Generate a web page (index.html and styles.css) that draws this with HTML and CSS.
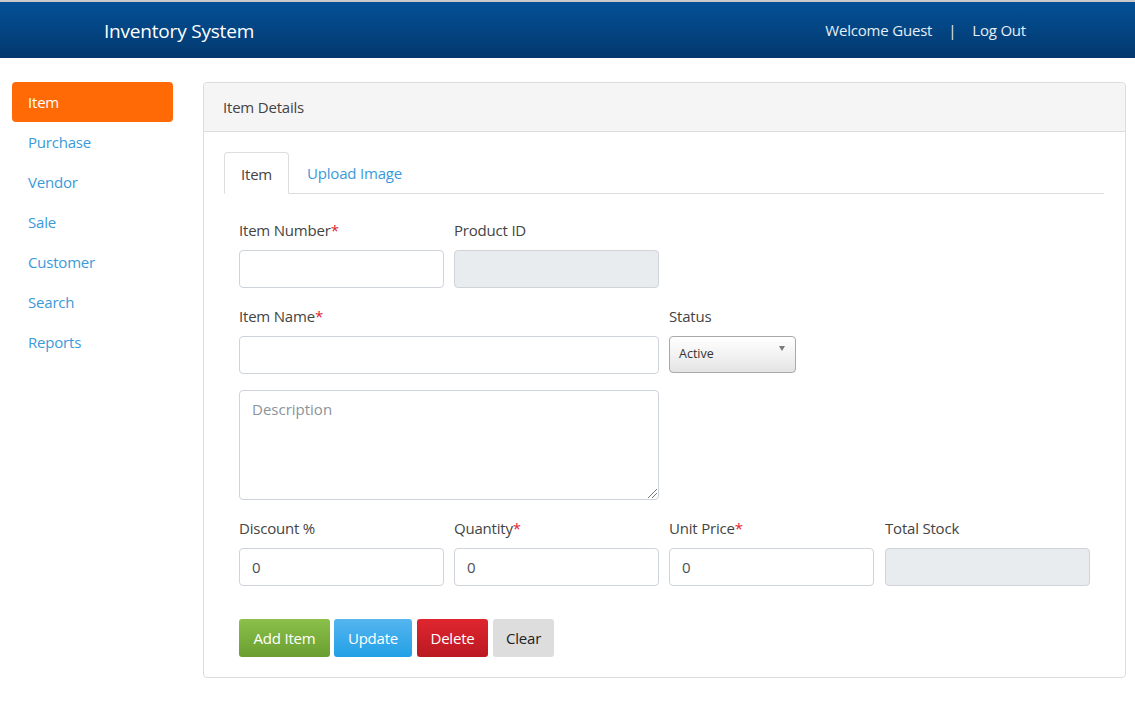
FILE: index.html
```html
<!DOCTYPE html>
<html>
<head>
<meta charset="utf-8">
<link rel="stylesheet" href="styles.css">
</head>
<body>
<header class="topbar">
  <div class="brand">Inventory System</div>
  <div class="user"><span>Welcome Guest</span><span class="sep">|</span><span>Log Out</span></div>
</header>
<div class="main">
  <nav class="sidebar">
    <a class="nav-item active">Item</a>
    <a class="nav-item">Purchase</a>
    <a class="nav-item">Vendor</a>
    <a class="nav-item">Sale</a>
    <a class="nav-item">Customer</a>
    <a class="nav-item">Search</a>
    <a class="nav-item">Reports</a>
  </nav>
  <section class="panel">
    <div class="panel-head">Item Details</div>
    <div class="panel-body">
      <div class="tabs">
        <div class="tab active">Item</div>
        <div class="tab link">Upload Image</div>
      </div>
      <div class="form">
        <div class="row">
          <div class="field"><label>Item Number<span class="req">*</span></label><div class="input"></div></div>
          <div class="field"><label>Product ID</label><div class="input disabled"></div></div>
        </div>
        <div class="row tight">
          <div class="field wide"><label>Item Name<span class="req">*</span></label><div class="input"></div></div>
          <div class="field"><label>Status</label><div class="select">Active<span class="caret"></span></div></div>
        </div>
        <div class="row">
          <div class="textarea">Description<span class="grip"></span></div>
        </div>
        <div class="row">
          <div class="field"><label>Discount %</label><div class="input">0</div></div>
          <div class="field"><label>Quantity<span class="req">*</span></label><div class="input">0</div></div>
          <div class="field"><label>Unit Price<span class="req">*</span></label><div class="input">0</div></div>
          <div class="field last"><label>Total Stock</label><div class="input disabled"></div></div>
        </div>
        <div class="buttons">
          <button class="btn green">Add Item</button>
          <button class="btn blue">Update</button>
          <button class="btn red">Delete</button>
          <button class="btn grey">Clear</button>
        </div>
      </div>
    </div>
  </section>
</div>
</body>
</html>
```
FILE: styles.css
```css
* { box-sizing: border-box; }
html, body { margin: 0; padding: 0; }
body {
  font-family: "Open Sans", "Noto Sans", sans-serif;
  font-size: 15px;
  color: #333;
  background: #fff;
}
.topbar {
  height: 58px;
  border-top: 2px solid #c9c9c9;
  background: linear-gradient(#035097, #03396e);
  display: flex;
  align-items: center;
  justify-content: space-between;
  color: #fff;
  padding: 2px 109px 0 104px;
}
.brand { font-size: 19px; letter-spacing: -0.2px; }
.user { font-size: 15px; color: #e6eef6; display: flex; gap: 0; padding-bottom: 2px; letter-spacing: -0.2px; }
.user .sep { margin: 0 16px; }
.main {
  display: flex;
  padding: 24px 9px 0 12px;
  gap: 30px;
}
.sidebar { width: 161px; display: flex; flex-direction: column; flex-shrink: 0; }
.nav-item {
  height: 40px;
  line-height: 40px;
  padding-left: 16px;
  color: #3a9ad9;
  font-size: 15px;
  letter-spacing: -0.2px;
  border-radius: 4px;
}
.nav-item.active { background: #ff6a07; color: #fff; }
.panel {
  flex: 1;
  border: 1px solid #dcdcdc;
  border-radius: 4px;
  height: 596px;
}
.panel-head {
  height: 49px;
  background: #f5f5f5;
  border-bottom: 1px solid #dcdcdc;
  padding-left: 19px;
  line-height: 48px;
  color: #444;
  letter-spacing: -0.2px;
  border-radius: 4px 4px 0 0;
}
.panel-body { padding: 20px 21px 0 20px; }
.tabs {
  display: flex;
  border-bottom: 1px solid #dddddd;
  height: 42px;
}
.tab {
  height: 42px;
  line-height: 42px;
  padding: 0 16px;
  letter-spacing: -0.2px;
}
.tab.active {
  background: #fff;
  border: 1px solid #ddd;
  border-bottom-color: #fff;
  border-radius: 4px 4px 0 0;
  height: 42px;
  color: #444;
}
.tab.link { color: #3a9ad9; padding-left: 18px; }
.form { padding: 26px 0 0 15px; }
.row { display: flex; gap: 10px; margin-bottom: 18px; }
.row.tight { margin-bottom: 16px; }
.field { width: 205px; display: flex; flex-direction: column; }
.field.wide { width: 420px; }
.field.last { margin-left: 1px; }
label { height: 20px; line-height: 20px; margin-bottom: 10px; color: #444; letter-spacing: -0.2px; }
.req { color: #e0222c; }
.input {
  height: 38px;
  border: 1px solid #cfd4da;
  border-radius: 4px;
  padding: 0 12px;
  line-height: 36px;
  color: #495057;
}
.input.disabled { background: #e9ecef; }
.select {
  width: 127px;
  height: 37px;
  border: 1px solid #a9a9a9;
  border-radius: 4px;
  background: linear-gradient(#ffffff, #f1f1f1 55%, #e3e3e3);
  font-size: 12.5px;
  line-height: 34px;
  padding-left: 9px;
  color: #333;
  position: relative;
}
.caret {
  position: absolute;
  right: 10px;
  top: 9px;
  border-left: 3px solid transparent;
  border-right: 3px solid transparent;
  border-top: 5px solid #7a7a7a;
}
.textarea {
  width: 420px;
  height: 110px;
  border: 1px solid #cfd4da;
  border-radius: 4px;
  padding: 8px 12px;
  color: #8a939b;
  position: relative;
}
.grip {
  position: absolute;
  right: 1px;
  bottom: 1px;
  width: 9px;
  height: 9px;
  background: linear-gradient(135deg, transparent 45%, #777 45%, #777 52%, transparent 52%, transparent 70%, #777 70%, #777 77%, transparent 77%);
}
.buttons { display: flex; gap: 4px; padding-top: 15px; }
.btn {
  font-family: inherit;
  font-size: 15px;
  height: 38px;
  border: 0;
  border-radius: 3px;
  color: #fff;
  padding: 0 13px;
  letter-spacing: -0.2px;
}
.btn.green { background: linear-gradient(#8bc04b, #6a9e30); width: 91px; }
.btn.blue { background: linear-gradient(#55b5ef, #22a0e6); width: 78px; }
.btn.red { background: linear-gradient(#e0262f, #ba1922); width: 71px; margin-left: 1px; }
.btn.grey { background: #dddddd; color: #222; width: 61px; margin-left: 1px; }
```
